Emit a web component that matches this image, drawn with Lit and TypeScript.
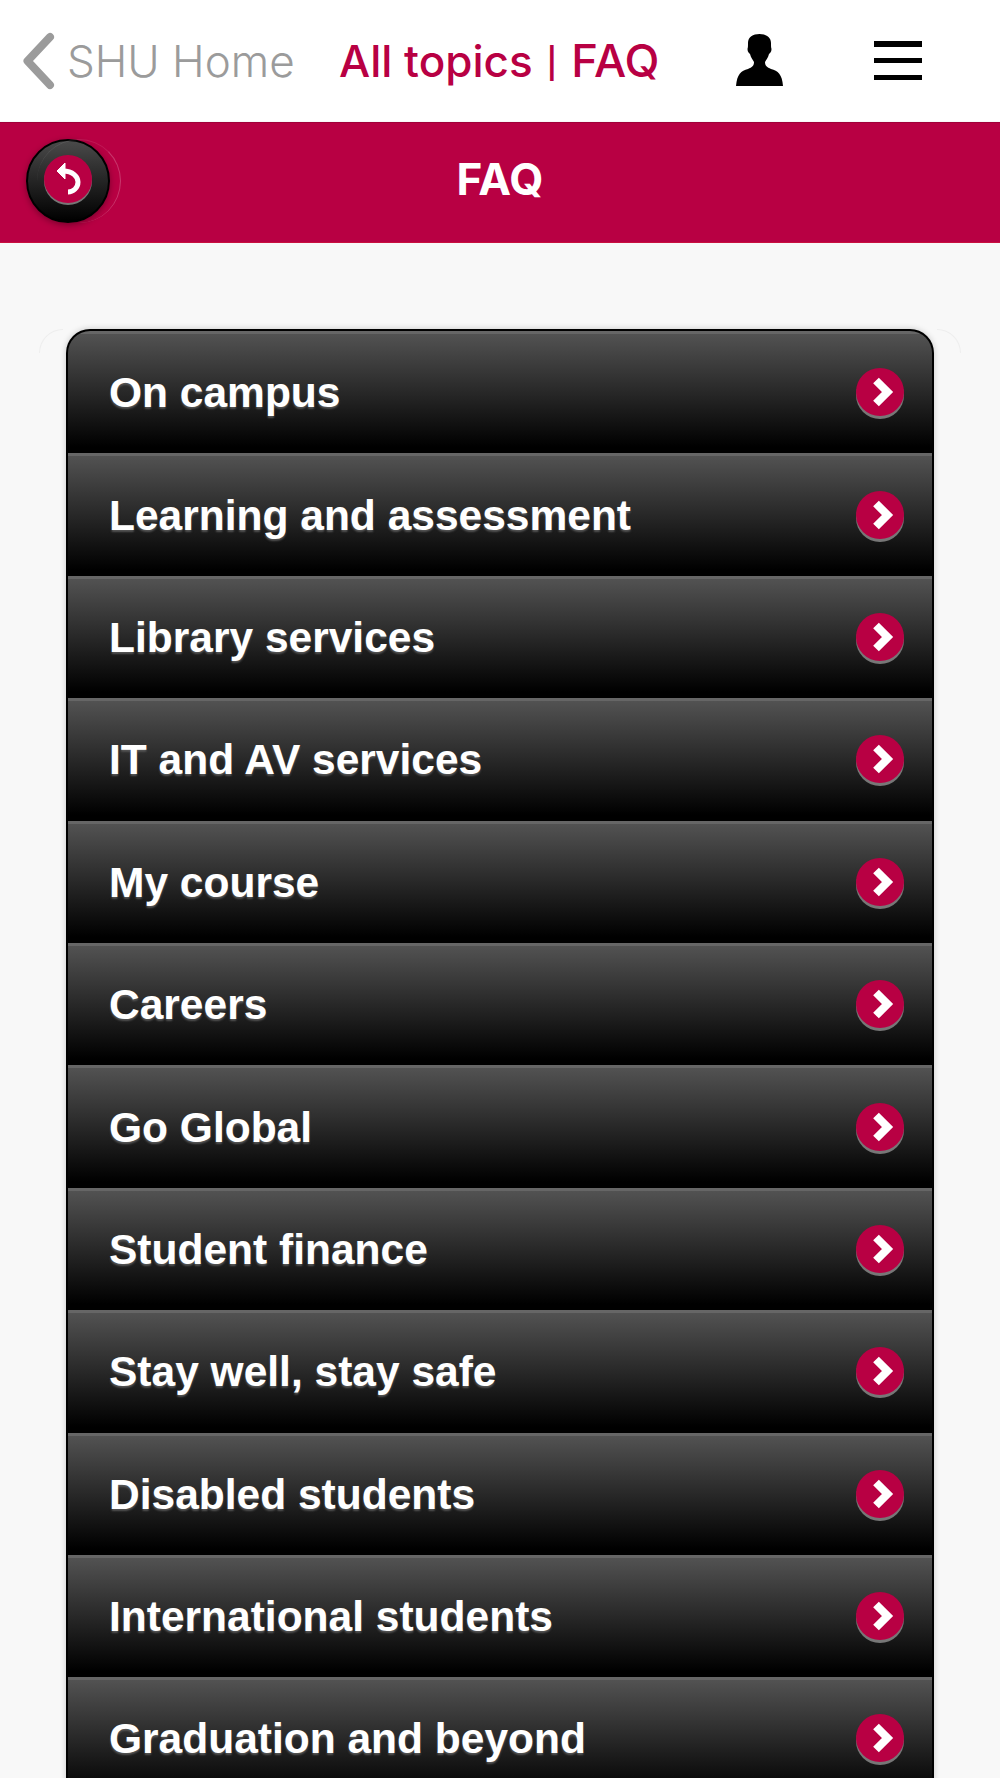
import { LitElement, html, css } from "lit";
import { customElement } from "lit/decorators.js";

const TOPICS = [
  "On campus",
  "Learning and assessment",
  "Library services",
  "IT and AV services",
  "My course",
  "Careers",
  "Go Global",
  "Student finance",
  "Stay well, stay safe",
  "Disabled students",
  "International students",
  "Graduation and beyond",
];

@customElement("app-root")
export class AppRoot extends LitElement {
  static styles = css`
    :host {
      display: block;
      width: 1000px;
      height: 1778px;
      overflow: hidden;
      background: #f8f8f8;
      font-family: "Liberation Sans", Arial, sans-serif;
    }
    .top {
      height: 121px;
      background: #fff;
      display: flex;
      align-items: center;
      position: relative;
    }
    .back {
      display: flex;
      align-items: center;
      margin-left: 21px;
      width: 318px;
      color: #9b9b9b;
      font-family: Inter, sans-serif;
      font-weight: 300;
      font-size: 44px;
      white-space: nowrap;
    }
    .back svg {
      flex: none;
      width: 34px;
      height: 60px;
      margin-right: 12px;
    }
    .title {
      color: #b80043;
      font-family: Inter, sans-serif;
      font-weight: 500;
      font-size: 44px;
      width: 397px;
      white-space: nowrap;
      display: flex;
      align-items: center;
    }
    .pipe {
      font-family: Roboto, sans-serif;
      font-weight: 700;
      font-size: 42px;
      margin: 0 14px 0 14px;
    }
    .faq {
      font-size: 45.5px;
    }
    .person {
      width: 47px;
      height: 52px;
      margin-top: -2px;
    }
    .burger {
      margin-left: 91px;
      width: 48px;
      display: flex;
      flex-direction: column;
      gap: 11.25px;
    }
    .burger span {
      height: 5.5px;
      background: #000;
    }
    .bar {
      height: 121px;
      margin-top: 1px;
      padding-bottom: 8px;
      background: #b80043;
      border-top: 1px solid #a00039;
      border-bottom: 1px solid #c8103f;
      box-sizing: border-box;
      display: flex;
      align-items: center;
      justify-content: center;
      position: relative;
      color: #fff;
      font-family: Inter, sans-serif;
      font-weight: 700;
      font-size: 44px;
    }
    .undo {
      position: absolute;
      left: 26px;
      top: 16px;
      width: 84px;
      height: 84px;
      border-radius: 50%;
      box-sizing: border-box;
      border: 2px solid #000;
      background: linear-gradient(#4a4a4a, #333 30%, #000);
      box-shadow: 0 2px 6px rgba(0, 0, 0, 0.35);
      display: flex;
      align-items: center;
      justify-content: center;
    }
    .undo::after {
      content: "";
      position: absolute;
      left: 9px;
      top: -2px;
      width: 84px;
      height: 84px;
      border-radius: 50%;
      border-right: 1px solid rgba(255, 255, 255, 0.22);
      border-top: 1px solid rgba(255, 255, 255, 0.1);
      box-sizing: border-box;
    }
    .undo-face {
      width: 48px;
      height: 48px;
      margin-bottom: 4px;
      border-radius: 50%;
      background: #b80043;
      box-shadow: 0 2px 0 #777;
      display: flex;
      align-items: center;
      justify-content: center;
    }
    .undo-face svg {
      width: 30px;
      height: 32px;
    }
    .panel {
      position: relative;
      padding: 86px 66px 0;
    }
    .panel::before,
    .panel::after {
      content: "";
      position: absolute;
      top: 86px;
      width: 24px;
      height: 24px;
      border-top: 1px solid #eee;
      box-sizing: border-box;
    }
    .panel::before {
      left: 39px;
      border-left: 1px solid #eee;
      border-top-left-radius: 24px;
    }
    .panel::after {
      right: 39px;
      border-right: 1px solid #eee;
      border-top-right-radius: 24px;
    }
    .list {
      position: relative;
      z-index: 1;
      width: 868px;
      box-sizing: border-box;
      border: 2px solid #000;
      border-bottom: none;
      border-radius: 24px 24px 0 0;
      box-shadow: 0 0 6px rgba(0, 0, 0, 0.2);
      overflow: hidden;
      background: #000;
    }
    .row {
      height: 122.4px;
      box-sizing: border-box;
      border-top: 3px solid #666;
      background: linear-gradient(#525252, #272727 50%, #000 95%);
      display: flex;
      align-items: center;
      justify-content: space-between;
      padding: 0 28px 0 41px;
      color: #fff;
      font-weight: 700;
      font-size: 42.5px;
      text-shadow: 0 2px 2px rgba(90, 90, 90, 0.9);
    }
    .row span {
      margin-bottom: 1px;
    }
    .go {
      width: 48px;
      height: 48px;
      margin-bottom: 3px;
      border-radius: 50%;
      background: #b80043;
      box-shadow: 0 3px 0 #777;
      flex: none;
    }
    .go svg {
      display: block;
      width: 48px;
      height: 48px;
    }
  `;

  render() {
    return html`
      <div class="top">
        <div class="back">
          <svg viewBox="0 0 34 60">
            <path d="M29 6 L6.5 30 L29 54" fill="none" stroke="#9b9b9b" stroke-width="8" stroke-linecap="round" stroke-linejoin="round" />
          </svg>
          SHU Home
        </div>
        <div class="title">All topics<span class="pipe">|</span><span class="faq">FAQ</span></div>
        <svg class="person" viewBox="0 0 47 52">
          <path d="M23.5 0C30 0 35 3 35 9C35 12 35 13 35.5 15C35.5 18 34 19 33 20C32 24 30 26 29 28C29 32 31 33 35 35C42 37 46 40 47 52H0C1 40 5 37 12 35C16 33 18 32 18 28C17 26 15 24 14 20C13 19 11.5 18 11.5 15C12 13 12 12 12 9C12 3 17 0 23.5 0Z" fill="#000" />
        </svg>
        <div class="burger"><span></span><span></span><span></span></div>
      </div>
      <div class="bar">
        <div class="undo">
          <div class="undo-face">
            <svg viewBox="0 0 30 32">
              <path d="M10 8C20 8 25 14 25 19C25 25 20 29 15 29" fill="none" stroke="#fff" stroke-width="5" />
              <path d="M12 0L4 8L12 16Z" fill="#fff" stroke="#fff" stroke-width="1" />
            </svg>
          </div>
        </div>
        FAQ
      </div>
      <div class="panel">
        <div class="list">
          ${TOPICS.map(
            (t) => html`
              <div class="row">
                <span>${t}</span>
                <div class="go">
                  <svg viewBox="0 0 48 48">
                    <path d="M20 12.5L31.5 24L20 35.5" fill="none" stroke="#fff" stroke-width="8" />
                  </svg>
                </div>
              </div>
            `
          )}
        </div>
      </div>
    `;
  }
}
